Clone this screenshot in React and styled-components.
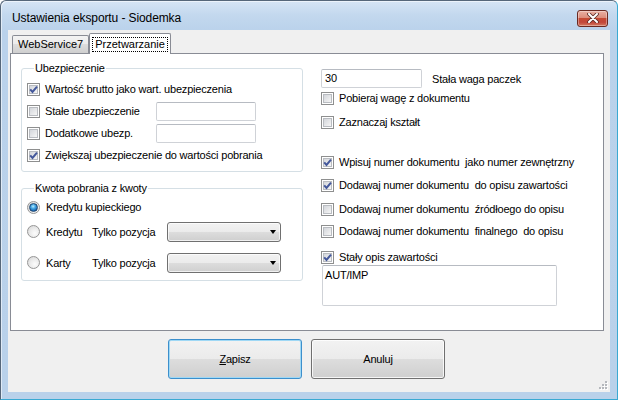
import React from "react";
import styled, { createGlobalStyle } from "styled-components";

const GlobalStyle = createGlobalStyle`
  html, body { margin: 0; padding: 0; background: #ffffff; }
  body { font-family: "Liberation Sans", Arial, sans-serif; font-size: 11px; color: #000; }
  * { box-sizing: border-box; }
`;

const Window = styled.div`
  position: relative;
  width: 618px;
  height: 400px;
  display: flex;
  flex-direction: column;
  background: linear-gradient(#d6e5f5 0, #c3d8ee 14px, #bad2eb 30px, #b9d1ea 100%);
  border: 1px solid #56677a;
  border-right-color: #3aa9d2;
  border-bottom-color: #3aa9d2;
  border-radius: 6px 6px 0 0;
  box-shadow: inset 1px 1px 0 rgba(255, 255, 255, 0.55);
`;

const TitleBar = styled.div`
  height: 29px;
  flex: none;
  display: flex;
  align-items: center;
  justify-content: space-between;
  padding: 5px 9px 0 11px;
`;

const Title = styled.span`
  font-size: 12px;
  color: #000;
  letter-spacing: -0.1px;
`;

const CloseButton = styled.div`
  width: 31px;
  height: 17px;
  display: flex;
  align-items: center;
  justify-content: center;
  border: 1px solid #6a2a22;
  border-radius: 3px;
  background: linear-gradient(#eab0a3 0, #dc8d7c 45%, #c64a34 50%, #c2473a 75%, #d57a60 100%);
  box-shadow: inset 0 0 0 1px rgba(255, 255, 255, 0.35);
`;

const Client = styled.div`
  position: relative;
  flex: 1;
  margin: 0 7px 7px 7px;
  background: #f0f0f0;
  display: flex;
  flex-direction: column;
  letter-spacing: -0.2px;
`;

const TabControl = styled.div`
  margin: 3px 6px 0 2px;
  display: flex;
  flex-direction: column;
`;

const TabStrip = styled.div`
  height: 20px;
  display: flex;
  align-items: flex-end;
  padding-left: 2px;
`;

const Tab = styled.div`
  position: relative;
  z-index: ${(p) => (p.$active ? 1 : 0)};
  height: ${(p) => (p.$active ? "21px" : "18px")};
  margin-bottom: ${(p) => (p.$active ? "-1px" : "0")};
  padding: ${(p) => (p.$active ? "3px 2px 2px" : "0 5px")};
  display: flex;
  align-items: ${(p) => (p.$active ? "flex-start" : "center")};
  border: 1px solid #898c95;
  border-bottom: none;
  border-radius: 2px 2px 0 0;
  background: ${(p) =>
    p.$active
      ? "#ffffff"
      : "linear-gradient(#f3f3f3 0, #ebebeb 50%, #dddddd 50%, #cfcfcf 100%)"};
  line-height: 13px;
  letter-spacing: 0;
`;

const FocusRect = styled.span`
  border: 1px dotted #000;
  padding: 0 2px;
  line-height: 13px;
`;

const Panel = styled.div`
  height: 278px;
  border: 1px solid #898c95;
  background: #ffffff;
  display: flex;
  padding: 8px 0 0 10px;
`;

const LeftColumn = styled.div`
  width: 282px;
  display: flex;
  flex-direction: column;
`;

const RightColumn = styled.div`
  margin-left: 18px;
  padding-top: 7px;
  display: flex;
  flex-direction: column;
`;

const Group = styled.fieldset`
  margin: ${(p) => p.$mt || 0}px 0 0 0;
  min-inline-size: 0;
  border: 1px solid #d5dfe5;
  border-radius: 3px;
  padding: ${(p) => p.$pt}px 5px ${(p) => p.$pb}px 5px;
  display: flex;
  flex-direction: column;
`;

const Legend = styled.legend`
  margin-left: 7px;
  padding: 0 1px;
  line-height: 13px;
  font-size: 11px;
`;

const Row = styled.div`
  height: ${(p) => p.$h || 22}px;
  margin-top: ${(p) => p.$mt || 0}px;
  display: flex;
  align-items: center;
`;

const CheckLabel = styled.div`
  width: ${(p) => (p.$w ? `${p.$w}px` : "auto")};
  display: flex;
  align-items: center;
  gap: 5px;
  flex: none;
`;

const Box = styled.span`
  position: relative;
  width: 13px;
  height: 13px;
  flex: none;
  border: 1px solid #8e8f8f;
  background: #ffffff;
  padding: 1px;
  display: flex;
`;

const BoxFill = styled.span`
  flex: 1;
  border: 1px solid #b9bcc1;
  background: linear-gradient(135deg, #d3d6db 0%, #e6e7e9 55%, #f6f6f6 100%);
`;

const Tick = styled.svg`
  position: absolute;
  left: 0;
  top: 0;
  width: 11px;
  height: 11px;
`;

const Caption = styled.span`
  white-space: pre;
  line-height: 13px;
`;

const RadioDot = styled.span`
  width: 13px;
  height: 13px;
  flex: none;
  border-radius: 50%;
  border: 1px solid #969696;
  background: radial-gradient(circle at 62% 65%, #fcfcfc 0, #ececec 45%, #d2d2d2 100%);
  display: flex;
  align-items: center;
  justify-content: center;

  &::after {
    content: "";
    display: ${(p) => (p.$on ? "block" : "none")};
    width: 7px;
    height: 7px;
    border-radius: 50%;
    border: 1px solid #20466f;
    background: radial-gradient(circle at 45% 35%, #b8ecff 0, #48a9e4 35%, #1662ae 75%, #0b3f7c 100%);
  }
`;

const RadioLabel = styled.div`
  width: ${(p) => (p.$w ? `${p.$w}px` : "auto")};
  display: flex;
  align-items: center;
  gap: 6px;
  flex: none;
`;

const FieldLabel = styled.span`
  width: ${(p) => p.$w}px;
  flex: none;
`;

const Combo = styled.div`
  width: 114px;
  height: 20px;
  border: 1px solid #707070;
  border-radius: 3px;
  background: linear-gradient(#f2f2f2 0, #ebebeb 50%, #dddddd 50%, #cfcfcf 100%);
  box-shadow: inset 0 0 0 1px rgba(255, 255, 255, 0.7);
  display: flex;
  align-items: center;
  justify-content: flex-end;
  padding-right: 4px;
`;

const Arrow = styled.span`
  width: 0;
  height: 0;
  border-left: 3.5px solid transparent;
  border-right: 3.5px solid transparent;
  border-top: 4px solid #000;
`;

const TextBox = styled.div`
  width: ${(p) => p.$w}px;
  height: ${(p) => p.$h}px;
  flex: none;
  margin-left: ${(p) => p.$ml || 0}px;
  border: 1px solid #cfd2d7;
  border-top-color: #b7bbc2;
  border-radius: 2px;
  background: #ffffff;
  padding: ${(p) => (p.$multi ? "3px 2px" : "0 3px")};
  display: flex;
  align-items: ${(p) => (p.$multi ? "flex-start" : "center")};
  line-height: 13px;
`;

const SideLabel = styled.span`
  margin-left: 10px;
`;

const ButtonRow = styled.div`
  margin-top: 8px;
  display: flex;
  justify-content: center;
  gap: 9px;
  padding-right: 5px;
`;

const Button = styled.button`
  width: 134px;
  height: 40px;
  padding: 0;
  border-radius: 3px;
  border: 1px solid ${(p) => (p.$default ? "#3c8fcc" : "#707070")};
  background: linear-gradient(#f2f2f2 0, #ebebeb 50%, #dddddd 50%, #cfcfcf 100%);
  box-shadow: inset 0 0 0 1px ${(p) => (p.$default ? "#9fd8f5" : "rgba(255,255,255,0.8)")};
  font-family: "Liberation Sans", Arial, sans-serif;
  font-size: 11px;
  letter-spacing: -0.2px;
  color: #000;
`;

const Grip = styled.svg`
  position: absolute;
  right: 2px;
  bottom: 2px;
  width: 9px;
  height: 9px;
`;

function Check({ checked, width, children }) {
  return (
    <CheckLabel $w={width}>
      <Box>
        <BoxFill />
        {checked && (
          <Tick viewBox="0 0 11 11">
            <path d="M2.2 5.4 L4.5 8 L9 2.6" fill="none" stroke="#44589b" strokeWidth="2" />
          </Tick>
        )}
      </Box>
      <Caption>{children}</Caption>
    </CheckLabel>
  );
}

function Radio({ on, width, children }) {
  return (
    <RadioLabel $w={width}>
      <RadioDot $on={on} />
      <span>{children}</span>
    </RadioLabel>
  );
}

const rightChecks = [
  { label: "Pobieraj wagę z dokumentu", checked: false, mt: 0 },
  { label: "Zaznaczaj kształt", checked: false, mt: 4 },
  { label: "Wpisuj numer dokumentu  jako numer zewnętrzny", checked: true, mt: 20 },
  { label: "Dodawaj numer dokumentu  do opisu zawartości", checked: true, mt: 3 },
  { label: "Dodawaj numer dokumentu  źródłoego do opisu", checked: false, mt: 4 },
  { label: "Dodawaj numer dokumentu  finalnego  do opisu", checked: false, mt: 2 },
];

export default function App() {
  return (
    <>
      <GlobalStyle />
      <Window>
        <TitleBar>
          <Title>Ustawienia eksportu - Siodemka</Title>
          <CloseButton>
            <svg width="12" height="10" viewBox="0 0 12 10">
              <path d="M2 1 L10 9 M10 1 L2 9" stroke="#5a2b26" strokeWidth="3.6" strokeLinecap="round" />
              <path d="M2 1 L10 9 M10 1 L2 9" stroke="#ffffff" strokeWidth="2" strokeLinecap="round" />
            </svg>
          </CloseButton>
        </TitleBar>
        <Client>
          <TabControl>
            <TabStrip>
              <Tab>WebService7</Tab>
              <Tab $active>
                <FocusRect>Przetwarzanie</FocusRect>
              </Tab>
            </TabStrip>
            <Panel>
              <LeftColumn>
                <Group $pt={3} $pb={5}>
                  <Legend>Ubezpieczenie</Legend>
                  <Row>
                    <Check checked>Wartość brutto jako wart. ubezpieczenia</Check>
                  </Row>
                  <Row>
                    <Check width={129}>Stałe ubezpieczenie</Check>
                    <TextBox $w={100} $h={19} />
                  </Row>
                  <Row>
                    <Check width={129}>Dodatkowe ubezp.</Check>
                    <TextBox $w={100} $h={19} />
                  </Row>
                  <Row>
                    <Check checked>Zwiększaj ubezpieczenie do wartości pobrania</Check>
                  </Row>
                </Group>
                <Group $mt={10} $pt={2} $pb={7}>
                  <Legend>Kwota pobrania z kwoty</Legend>
                  <Row $h={20}>
                    <Radio on>Kredytu kupieckiego</Radio>
                  </Row>
                  <Row $h={21} $mt={4}>
                    <Radio width={65}>Kredytu</Radio>
                    <FieldLabel $w={75}>Tylko pozycja</FieldLabel>
                    <Combo>
                      <Arrow />
                    </Combo>
                  </Row>
                  <Row $h={21} $mt={10}>
                    <Radio width={65}>Karty</Radio>
                    <FieldLabel $w={75}>Tylko pozycja</FieldLabel>
                    <Combo>
                      <Arrow />
                    </Combo>
                  </Row>
                </Group>
              </LeftColumn>
              <RightColumn>
                <Row $h={19}>
                  <TextBox $w={101} $h={19}>30</TextBox>
                  <SideLabel>Stała waga paczek</SideLabel>
                </Row>
                {rightChecks.map((c) => (
                  <Row key={c.label} $h={20} $mt={c.mt}>
                    <Check checked={c.checked}>{c.label}</Check>
                  </Row>
                ))}
                <Row $h={16} $mt={8}>
                  <Check checked>Stały opis zawartości</Check>
                </Row>
                <TextBox $w={235} $h={41} $ml={1} $multi>
                  AUT/IMP
                </TextBox>
              </RightColumn>
            </Panel>
          </TabControl>
          <ButtonRow>
            <Button $default>
              <u>Z</u>apisz
            </Button>
            <Button>Anuluj</Button>
          </ButtonRow>
          <Grip viewBox="0 0 9 9">
            {[
              [6, 0],
              [3, 3],
              [6, 3],
              [0, 6],
              [3, 6],
              [6, 6],
            ].map(([x, y]) => (
              <g key={`${x}-${y}`}>
                <rect x={x + 1} y={y + 1} width="2" height="2" fill="#ffffff" />
                <rect x={x} y={y} width="2" height="2" fill="#b5b8bd" />
              </g>
            ))}
          </Grip>
        </Client>
      </Window>
    </>
  );
}
